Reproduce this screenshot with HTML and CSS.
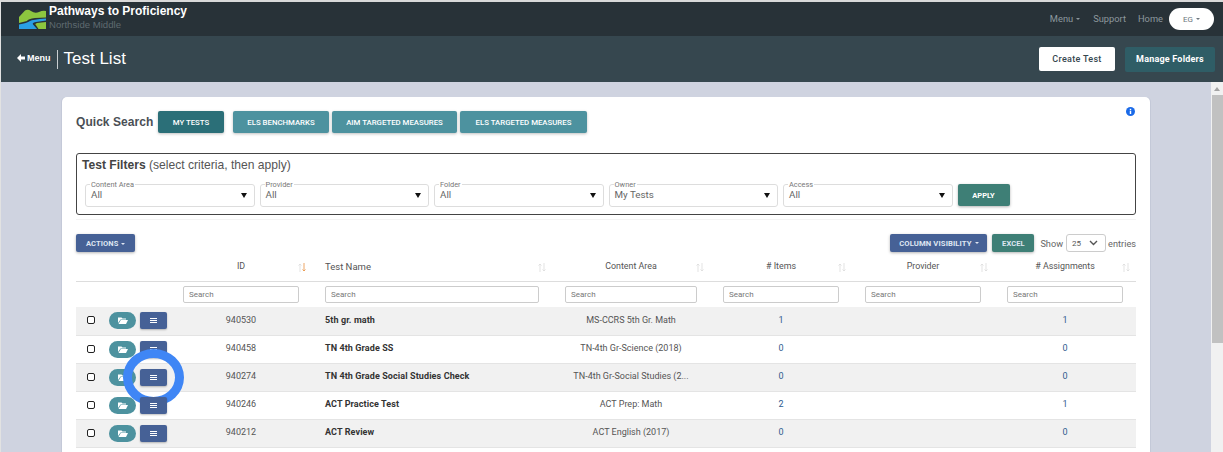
FILE: index.html
```html
<!DOCTYPE html>
<html lang="en">
<head>
<meta charset="utf-8">
<title>Test List</title>
<link rel="stylesheet" href="styles.css">
</head>
<body>
<header class="topbar">
  <div class="brand">
    <svg class="logo" viewBox="0 0 27 20" width="27" height="20" aria-hidden="true">
      <path d="M0 8 L6 1.5 Q9 0 12 2 Q16 5 20 3 Q24 1 27 2 V8.5 L16 9 Q9 10 8 12 L0 14Z" fill="#8dc63f"/>
      <path d="M0 20 V15.5 Q8 14 11 12 Q13 10.5 27 9.5 V11.5 L17 13 Q12 14 14.5 16 L18 20Z" fill="#2a9fe5"/>
      <path d="M19.5 20 L16.5 15.5 Q16 14.5 18 14 L27 13 V20Z" fill="#8dc63f"/>
    </svg>
    <div class="brand-text">
      <div class="brand-name">Pathways to Proficiency</div>
      <div class="brand-school">Northside Middle</div>
    </div>
  </div>
  <nav class="topnav">
    <span class="navitem">Menu<i class="caret"></i></span>
    <span class="navitem">Support</span>
    <span class="navitem last">Home</span>
    <span class="user">EG<i class="caret"></i></span>
  </nav>
</header>
<section class="subbar">
  <div class="subleft">
    <span class="menu-back"><svg width="8" height="8" viewBox="0 0 8 8" aria-hidden="true"><path d="M4 0 L0 4 L4 8 V5.5 H8 V2.5 H4Z" fill="#fff"/></svg>Menu</span>
    <h1 class="page-title">Test List</h1>
  </div>
  <div class="subright">
    <button class="btn-create">Create Test</button>
    <button class="btn-folders">Manage Folders</button>
  </div>
</section>
<div class="viewport">
  <main class="content">
    <div class="card">
      <svg class="info" viewBox="0 0 10 10" width="9" height="9" aria-hidden="true"><circle cx="5" cy="5" r="5" fill="#1a6ae8"/><rect x="4.2" y="4.2" width="1.6" height="3.6" fill="#fff"/><rect x="4.2" y="2" width="1.6" height="1.5" fill="#fff"/></svg>
      <div class="quick">
        <span class="quick-label">Quick Search</span>
        <button class="qbtn active">MY TESTS</button>
        <div class="qgroup">
          <button class="qbtn b1">ELS BENCHMARKS</button>
          <button class="qbtn b2">AIM TARGETED MEASURES</button>
          <button class="qbtn b2">ELS TARGETED MEASURES</button>
        </div>
      </div>
      <div class="filters">
        <div class="filters-title"><b>Test Filters</b> (select criteria, then apply)</div>
        <div class="filter-row">
          <fieldset class="field"><legend>Content Area</legend><span>All</span><i class="tri"></i></fieldset>
          <fieldset class="field"><legend>Provider</legend><span>All</span><i class="tri"></i></fieldset>
          <fieldset class="field"><legend>Folder</legend><span>All</span><i class="tri"></i></fieldset>
          <fieldset class="field"><legend>Owner</legend><span>My Tests</span><i class="tri"></i></fieldset>
          <fieldset class="field"><legend>Access</legend><span>All</span><i class="tri"></i></fieldset>
          <button class="apply">APPLY</button>
        </div>
      </div>
      <hr class="rule">
      <div class="toolbar">
        <button class="tbtn blue">ACTIONS<i class="caret"></i></button>
        <div class="tools-right">
          <button class="tbtn blue wide">COLUMN VISIBILITY<i class="caret"></i></button>
          <button class="tbtn green">EXCEL</button>
          <span class="show first">Show</span>
          <span class="entries-select">25<svg width="9" height="6" viewBox="0 0 9 6" aria-hidden="true"><path d="M1 1 L4.5 4.5 L8 1" fill="none" stroke="#555" stroke-width="1.4"/></svg></span>
          <span class="show">entries</span>
        </div>
      </div>
      <table class="grid">
        <colgroup>
          <col class="c0"><col class="c1"><col class="c2"><col class="c3"><col class="c4"><col class="c5"><col class="c6">
        </colgroup>
        <thead>
          <tr class="heads">
            <th></th>
            <th>ID<svg class="sort" width="8" height="9" viewBox="0 0 8 9" aria-hidden="true"><path d="M2 9 V1 M0.5 2.5 L2 1 L3.5 2.5" class="up"/><path d="M6 0 V8 M4.5 6.5 L6 8 L7.5 6.5" class="down on"/></svg></th>
            <th class="left">Test Name<svg class="sort" width="8" height="9" viewBox="0 0 8 9" aria-hidden="true"><path d="M2 9 V1 M0.5 2.5 L2 1 L3.5 2.5" class="up"/><path d="M6 0 V8 M4.5 6.5 L6 8 L7.5 6.5" class="down"/></svg></th>
            <th>Content Area<svg class="sort" width="8" height="9" viewBox="0 0 8 9" aria-hidden="true"><path d="M2 9 V1 M0.5 2.5 L2 1 L3.5 2.5" class="up"/><path d="M6 0 V8 M4.5 6.5 L6 8 L7.5 6.5" class="down"/></svg></th>
            <th># Items<svg class="sort" width="8" height="9" viewBox="0 0 8 9" aria-hidden="true"><path d="M2 9 V1 M0.5 2.5 L2 1 L3.5 2.5" class="up"/><path d="M6 0 V8 M4.5 6.5 L6 8 L7.5 6.5" class="down"/></svg></th>
            <th>Provider<svg class="sort" width="8" height="9" viewBox="0 0 8 9" aria-hidden="true"><path d="M2 9 V1 M0.5 2.5 L2 1 L3.5 2.5" class="up"/><path d="M6 0 V8 M4.5 6.5 L6 8 L7.5 6.5" class="down"/></svg></th>
            <th># Assignments<svg class="sort" width="8" height="9" viewBox="0 0 8 9" aria-hidden="true"><path d="M2 9 V1 M0.5 2.5 L2 1 L3.5 2.5" class="up"/><path d="M6 0 V8 M4.5 6.5 L6 8 L7.5 6.5" class="down"/></svg></th>
          </tr>
          <tr class="searches">
            <th></th>
            <th><input placeholder="Search"></th>
            <th><input placeholder="Search"></th>
            <th><input placeholder="Search"></th>
            <th><input placeholder="Search"></th>
            <th><input placeholder="Search"></th>
            <th><input placeholder="Search"></th>
          </tr>
        </thead>
        <tbody>
          <tr>
            <td class="acts"><i class="check"></i><span class="folder"><svg width="10" height="7" viewBox="0 0 10 7"><path d="M0 0.5 H3.5 L4.5 1.5 H8 V2.5 H2.5 L0 6Z M2.8 3 H10 L8 7 H0.5Z" fill="#fff"/></svg></span><span class="lines"><b></b><b></b><b></b></span></td>
            <td>940530</td><td class="name">5th gr. math</td><td>MS-CCRS 5th Gr. Math</td><td class="num">1</td><td></td><td class="num">1</td>
          </tr>
          <tr>
            <td class="acts"><i class="check"></i><span class="folder"><svg width="10" height="7" viewBox="0 0 10 7"><path d="M0 0.5 H3.5 L4.5 1.5 H8 V2.5 H2.5 L0 6Z M2.8 3 H10 L8 7 H0.5Z" fill="#fff"/></svg></span><span class="lines"><b></b><b></b><b></b></span></td>
            <td>940458</td><td class="name">TN 4th Grade SS</td><td>TN-4th Gr-Science (2018)</td><td class="num">0</td><td></td><td class="num">0</td>
          </tr>
          <tr>
            <td class="acts"><i class="check"></i><span class="folder"><svg width="10" height="7" viewBox="0 0 10 7"><path d="M0 0.5 H3.5 L4.5 1.5 H8 V2.5 H2.5 L0 6Z M2.8 3 H10 L8 7 H0.5Z" fill="#fff"/></svg></span><span class="lines"><b></b><b></b><b></b></span><span class="ring"></span></td>
            <td>940274</td><td class="name">TN 4th Grade Social Studies Check</td><td>TN-4th Gr-Social Studies (2...</td><td class="num">0</td><td></td><td class="num">0</td>
          </tr>
          <tr>
            <td class="acts"><i class="check"></i><span class="folder"><svg width="10" height="7" viewBox="0 0 10 7"><path d="M0 0.5 H3.5 L4.5 1.5 H8 V2.5 H2.5 L0 6Z M2.8 3 H10 L8 7 H0.5Z" fill="#fff"/></svg></span><span class="lines"><b></b><b></b><b></b></span></td>
            <td>940246</td><td class="name">ACT Practice Test</td><td>ACT Prep: Math</td><td class="num">2</td><td></td><td class="num">1</td>
          </tr>
          <tr>
            <td class="acts"><i class="check"></i><span class="folder"><svg width="10" height="7" viewBox="0 0 10 7"><path d="M0 0.5 H3.5 L4.5 1.5 H8 V2.5 H2.5 L0 6Z M2.8 3 H10 L8 7 H0.5Z" fill="#fff"/></svg></span><span class="lines"><b></b><b></b><b></b></span></td>
            <td>940212</td><td class="name">ACT Review</td><td>ACT English (2017)</td><td class="num">0</td><td></td><td class="num">0</td>
          </tr>
        </tbody>
      </table>
    </div>
  </main>
  <div class="scrollbar"><span class="arrow"></span><span class="thumb"></span></div>
</div>
</body>
</html>
```
FILE: styles.css
```css
* { box-sizing: border-box; }
html, body { margin: 0; height: 452px; overflow: hidden; }
body { font-family: Roboto, "Liberation Sans", sans-serif; background: #cfd3e0; color: #444; border-top: 2px solid #d9d9d9; border-left: 1px solid #e2e2e2; display: flex; flex-direction: column; }
i { font-style: normal; }
button { font-family: inherit; border: 0; cursor: pointer; }

.topbar { height: 34px; flex: none; background: #283238; display: flex; justify-content: space-between; padding: 0 9px 0 18px; }
.brand { display: flex; }
.logo { margin-top: 7px; }
.brand-text { margin-left: 3px; font-family: "Liberation Sans", sans-serif; }
.brand-name { color: #fff; font-weight: 700; font-size: 12px; line-height: 14px; margin-top: 2px; }
.brand-school { color: #5f6a70; font-size: 9.6px; line-height: 12px; margin-top: 1px; }
.topnav { display: flex; align-items: center; }
.navitem { color: #8d989e; font-size: 9.3px; margin-right: 13px; padding-bottom: 2px; position: relative; left: 1px; }
.navitem.last { margin-right: 6px; left: 0; }
.user { width: 45px; height: 22px; border-radius: 11px; background: #fff; color: #6c757d; font-size: 8px; display: flex; align-items: center; justify-content: center; }
.caret { display: inline-block; border: 2.5px solid transparent; border-top-color: currentColor; border-bottom: 0; margin-left: 3px; vertical-align: middle; }

.subbar { height: 46px; flex: none; background: #36474f; display: flex; justify-content: space-between; align-items: center; padding: 0 8px 0 16px; }
.subleft { display: flex; align-items: center; }
.menu-back { color: #fff; font-weight: 700; font-size: 9px; font-family: "Liberation Sans", sans-serif; display: flex; align-items: center; gap: 2px; height: 19px; padding: 0 6px 3px 0; border-right: 1px solid #c9ced1; margin-top: 1px; }
.page-title { margin: 0 0 0 6px; color: #fff; font-size: 17px; font-weight: 400; line-height: 20px; font-family: "Liberation Sans", sans-serif; }
.subright { display: flex; gap: 10px; }
.btn-create { width: 76px; height: 24px; background: #fff; color: #36474f; font-size: 9px; font-weight: 500; border-radius: 2px; letter-spacing: .3px; }
.btn-folders { width: 90px; height: 25px; background: #2f5d66; color: #fff; font-size: 9px; font-weight: 700; border-radius: 2px; letter-spacing: .2px; }

.viewport { flex: 1; min-height: 0; display: flex; }
.content { flex: 1; padding: 15px 61px 0 61px; min-width: 0; min-height: 0; }
.card { position: relative; background: #fff; border-radius: 5px 5px 0 0; height: 100%; overflow: hidden; padding: 14px 14px 0; box-shadow: -1px 0 0 #c4c9d8, 1px 0 0 #c4c9d8; }
.info { position: absolute; top: 10px; right: 15px; }

.quick { display: flex; align-items: center; height: 22px; }
.quick-label { font-family: "Liberation Sans", sans-serif; font-size: 12px; font-weight: 700; color: #4a4f55; letter-spacing: .05px; width: 82px; }
.qgroup { display: flex; gap: 3px; margin-left: 9px; }
.qbtn { height: 22px; color: #fff; font-size: 7.8px; font-weight: 500; border-radius: 2px; box-shadow: 0 1px 3px rgba(0,0,0,.25); background: #4d929f; padding: 0; }
.active { width: 66px; background: #2b6f78; }
.b1 { width: 96px; }
.b2 { width: 125px; }
.b2 + .b2 { width: 127px; }

.filters { margin-top: 20px; height: 62px; border: 1px solid #444; border-radius: 3px; padding: 4px 5px 0; }
.filters-title { font-family: "Liberation Sans", sans-serif; font-size: 12.1px; line-height: 14px; color: #555; }
.filters-title b { font-weight: 700; color: #444; }
.filter-row { display: flex; gap: 5px; margin-top: 8px; padding-left: 3px; }
.field { width: 169.5px; height: 27px; margin: 0; border: 1px solid #ddd; border-radius: 3px; padding: 0 5px; position: relative; font-size: 9.8px; color: #666; line-height: 11px; }
.field legend { font-size: 7.4px; color: #777; padding: 0 1px; margin-left: -1px; line-height: 9px; }
.field span { display: block; }
.tri { position: absolute; right: 7px; top: 4px; border: 3px solid transparent; border-top: 5px solid #111; border-bottom: 0; }
.apply { width: 52px; height: 22px; margin-top: 4px; background: #3e7f76; color: #fff; font-size: 7.5px; font-weight: 700; border-radius: 2px; box-shadow: 0 1px 3px rgba(0,0,0,.3); }

.rule { margin: 4px 0 0; border: 0; border-top: 1px solid #f4f4f4; }
.toolbar { display: flex; justify-content: space-between; align-items: center; margin-top: 14px; height: 18px; }
.tools-right { display: flex; align-items: center; gap: 5px; }
.tbtn { height: 18px; color: #dfe6f2; font-size: 7.5px; font-weight: 700; border-radius: 2px; box-shadow: 0 1px 3px rgba(0,0,0,.3); letter-spacing: .1px; }
.blue { background: #466196; padding: 0 10px; }
.wide { width: 97px; padding: 0; font-size: 7.7px; }
.green { background: #3e7f76; width: 42px; padding: 0; }
.show { font-size: 9.2px; color: #666; }
.show.first { margin-left: 1px; }
.entries-select { width: 40px; height: 18px; border: 1px solid #ccc; border-radius: 3px; font-size: 8px; color: #555; display: flex; align-items: center; justify-content: space-between; padding: 0 7px 0 5px; margin: 0 -3px 0 -2px; }

.grid { width: 1060px; table-layout: fixed; border-collapse: collapse; margin-top: 6px; font-size: 9px; color: #555; }
.c0 { width: 94px; } .c1 { width: 142px; } .c2 { width: 240px; } .c3 { width: 158px; } .c4 { width: 142px; } .c5 { width: 142px; } .c6 { width: 142px; }
.heads th { height: 23px; font-weight: 400; font-size: 8.9px; color: #555; border-bottom: 1px solid #ddd; position: relative; text-align: center; padding: 0 0 6px; }
.heads th.left { text-align: left; padding-left: 13px; font-size: 9.5px; }
.sort { position: absolute; right: 6px; top: 5px; fill: none; stroke: #dcdcdc; stroke-width: .8; }
.sort .on { stroke: #e8913f; }
.searches th { height: 26px; padding: 0 13px; }
.searches input { width: 100%; height: 17px; border: 1px solid #ccc; border-radius: 2px; font: 8px Roboto, sans-serif; padding: 0 5px; display: block; }
.searches input::placeholder { color: #777; }
tbody tr { height: 28px; border-bottom: 1px solid #e4e4e4; }
tbody tr:nth-child(odd) { background: #f1f1f1; }
tbody td { text-align: center; padding: 0 0 2px; }
tbody td.name { text-align: left; padding-left: 13px; font-weight: 700; color: #333; letter-spacing: .1px; }
tbody td.num { color: #2f5b8f; }
td.acts { position: relative; padding: 0; text-align: left; }
.check { position: absolute; left: 11px; top: 9px; width: 8px; height: 8px; border: 1px solid #222; border-radius: 2px; background: #fff; }
.folder { position: absolute; left: 33px; top: 5px; width: 27px; height: 17px; border-radius: 9px; background: #4d929f; display: flex; align-items: center; justify-content: center; }
.lines { position: absolute; left: 64px; top: 5px; width: 27px; height: 17px; border-radius: 2px; background: #466196; display: flex; flex-direction: column; gap: 1px; align-items: center; justify-content: center; box-shadow: 0 1px 2px rgba(0,0,0,.25); }
.lines b { width: 7px; height: 1px; background: #fff; }
.ring { position: absolute; left: 47px; top: -15px; width: 61px; height: 57px; border: 9px solid #3f86f5; border-radius: 50%; }

.scrollbar { width: 12px; flex: none; background: #f1f1f1; position: relative; display: flex; flex-direction: column; }
.arrow { height: 13px; flex: none; display: flex; align-items: center; justify-content: center; }
.arrow::before { content: ""; border: 3px solid transparent; border-bottom: 4px solid #a3a3a3; border-top: 0; }
.thumb { height: 248px; margin-left: 1px; background: #c1c1c1; }
```
